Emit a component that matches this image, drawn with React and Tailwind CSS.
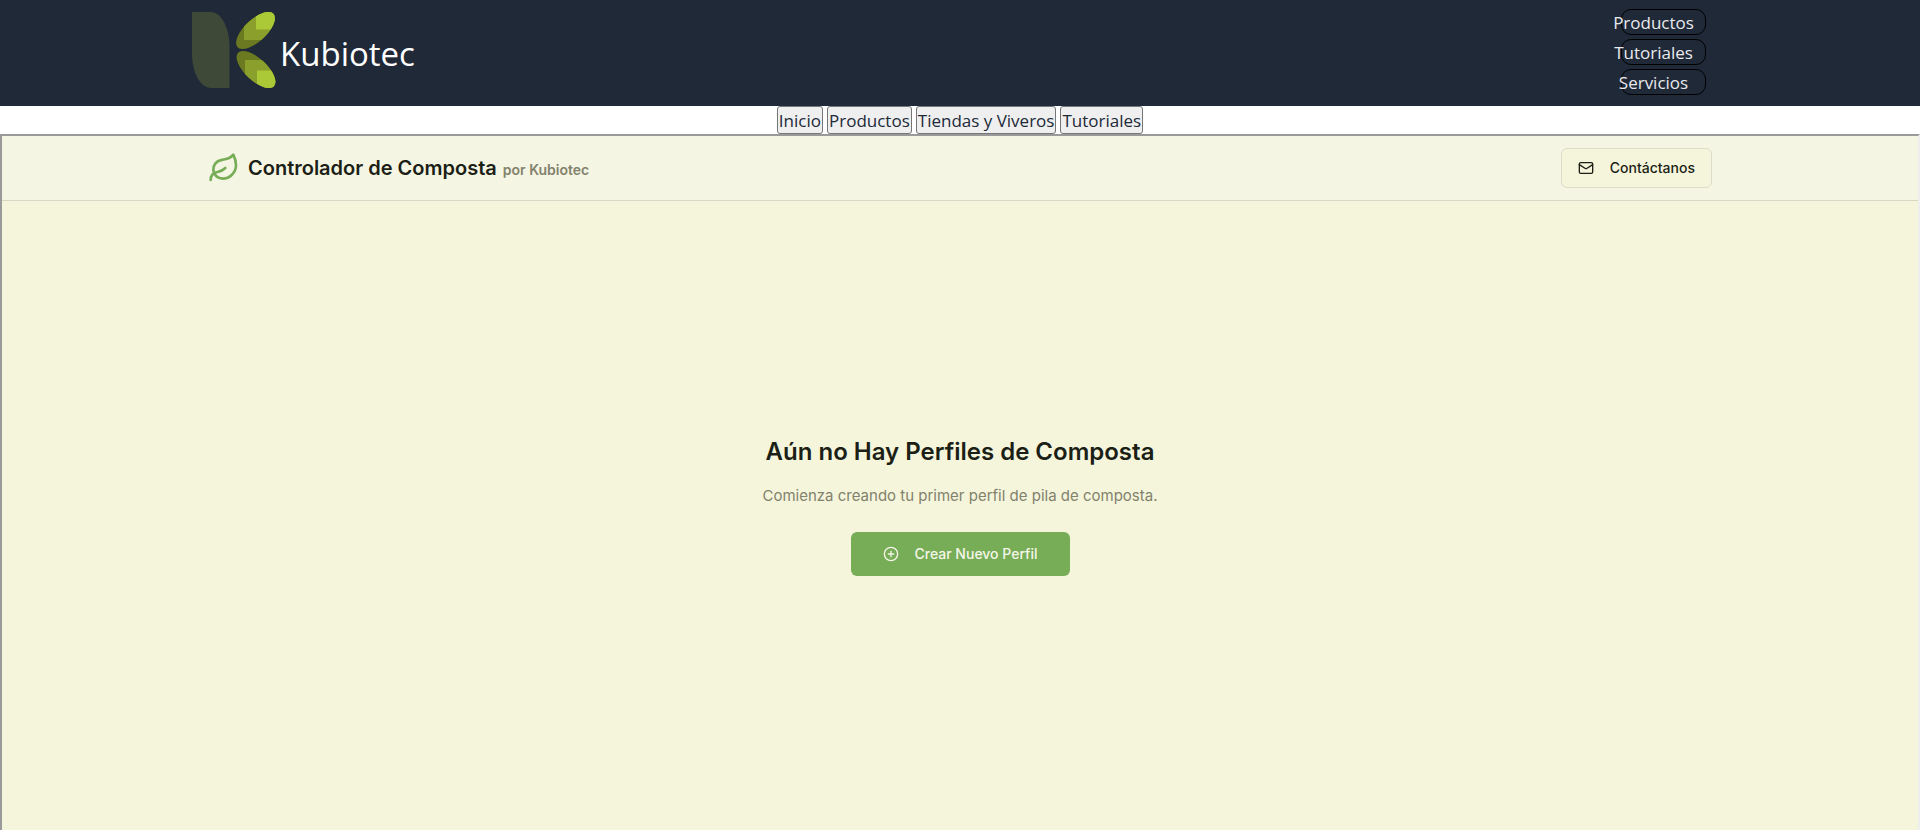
import { CirclePlus, Leaf, Mail } from "lucide-react";

const headerLinks = ["Productos", "Tutoriales", "Servicios"];
const navLinks = ["Inicio", "Productos", "Tiendas y Viveros", "Tutoriales"];

function Logo() {
  return (
    <svg width="84" height="76" viewBox="0 0 84 76" aria-hidden="true">
      <defs>
        <clipPath id="leaf-top">
          <ellipse cx="63.5" cy="18.5" rx="24.5" ry="11" transform="rotate(-43 63.5 18.5)" />
        </clipPath>
        <clipPath id="leaf-bottom">
          <ellipse cx="64" cy="57.5" rx="24.5" ry="11" transform="rotate(43 64 57.5)" />
        </clipPath>
      </defs>
      <path d="M0 0H18.500C29 0 37.500 15 37.500 35V76H19C8.500 76 0 61 0 41Z" fill="#3f4937" />
      <g clipPath="url(#leaf-top)">
        <path d="M40 -2H84V40H40Z" fill="#6b7921" />
        <path d="M52 -2H84V28H52Z" fill="#8a9f2c" />
        <path d="M64 -2H84V17.500H64Z" fill="#abc837" />
      </g>
      <g clipPath="url(#leaf-bottom)">
        <path d="M40 36H84V78H40Z" fill="#6b7921" />
        <path d="M53 48H84V78H53Z" fill="#8a9f2c" />
        <path d="M65 58.500H84V78H65Z" fill="#abc837" />
      </g>
    </svg>
  );
}

function SiteHeader() {
  return (
    <header className="flex h-[106px] items-start justify-between bg-[#202938] pr-[214px] pl-48">
      <a href="#inicio" className="flex items-center gap-1 pt-3 text-white">
        <Logo />
        <span className="pt-2 text-[33px] leading-10">Kubiotec</span>
      </a>
      <div className="flex flex-col gap-1 pt-[9px]">
        {headerLinks.map((label) => (
          <button
            key={label}
            type="button"
            className="flex h-[26px] w-[85px] items-center justify-center rounded-[10px] border border-black pt-0.5 pr-5 text-[17px] leading-6 text-[#e8eaed]"
          >
            {label}
          </button>
        ))}
      </div>
    </header>
  );
}

function SiteNav() {
  return (
    <nav className="flex h-7 justify-center gap-1 bg-white">
      {navLinks.map((label) => (
        <button
          key={label}
          type="button"
          className="rounded-[3px] border border-[#767676] bg-[#efefef] px-px pt-0.5 text-[17px] leading-6 text-[#202938]"
        >
          {label}
        </button>
      ))}
    </nav>
  );
}

export default function App() {
  return (
    <div className="flex min-h-screen flex-col font-['Open_Sans',sans-serif]">
      <SiteHeader />
      <SiteNav />
      <section className="flex flex-1 flex-col border-t-2 border-r-2 border-l-2 border-t-[#9a9a9a] border-r-[#eeeeee] border-l-[#9a9a9a] bg-[#f5f5dc] font-[Inter,sans-serif] text-[#1c1f16]">
        <div className="border-b border-[#d8d8c4] bg-[#f5f5e4]">
          <div className="mx-auto flex h-16 max-w-[1536px] items-center justify-between px-4">
            <div className="flex items-center gap-2">
              <Leaf size={32} className="text-[#77ad57]" />
              <h1 className="flex items-baseline gap-1.5 text-xl font-semibold">
                Controlador de Composta
                <span className="text-sm text-[#82826c]">por Kubiotec</span>
              </h1>
            </div>
            <button
              type="button"
              className="flex h-10 items-center gap-4 rounded-md border border-[#dcdcc8] bg-[#f5f5dc] px-4 text-sm font-medium"
            >
              <Mail size={16} />
              Contáctanos
            </button>
          </div>
        </div>
        <main className="flex flex-1 flex-col items-center justify-center pb-5">
          <h2 className="text-2xl leading-8 font-semibold">Aún no Hay Perfiles de Composta</h2>
          <p className="mt-4 text-[15px] leading-6 text-[#82826c]">
            Comienza creando tu primer perfil de pila de composta.
          </p>
          <button
            type="button"
            className="mt-6 flex h-11 items-center gap-4 rounded-md bg-[#77ad57] px-8 text-sm font-medium text-[#f5f5e8]"
          >
            <CirclePlus size={16} />
            Crear Nuevo Perfil
          </button>
        </main>
      </section>
    </div>
  );
}
